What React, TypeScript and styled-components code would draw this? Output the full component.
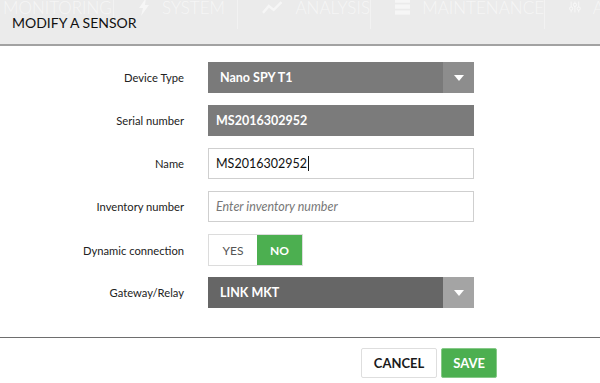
import styled, { createGlobalStyle } from "styled-components";

const GlobalStyle = createGlobalStyle`
    html, body {
        margin: 0;
        padding: 0;
        background: #fff;
        font-family: Lato, "Open Sans", sans-serif;
    }
`;

const Modal = styled.div`
    width: 600px;
    height: 383px;
    background: #fff;
    overflow: hidden;
    display: flex;
    flex-direction: column;
`;

const Header = styled.div`
    position: relative;
    height: 44px;
    background: #ebebeb;
    border-bottom: 2px solid #a2a2a2;
    display: flex;
    align-items: center;
    padding-left: 12px;
    overflow: hidden;
`;

const GhostNav = styled.div`
    position: absolute;
    top: -4px;
    left: 0;
    display: flex;
    align-items: center;
    height: 22px;
    color: rgba(255, 255, 255, 0.55);
    font-size: 17px;
    font-weight: 300;
    white-space: nowrap;
`;

const GhostItem = styled.div<{ $w: number }>`
    width: ${(p) => p.$w}px;
    display: flex;
    align-items: center;
    gap: 12px;
    padding-left: 24px;
    box-sizing: border-box;
    border-left: 1px solid rgba(255, 255, 255, 0.35);
    height: 44px;

    &:first-child {
        padding-left: 3px;
        border-left: none;
    }
`;

const Title = styled.h1`
    position: relative;
    margin: 1px 0 0;
    font-size: 14px;
    font-weight: 400;
    color: #111;
`;

const Body = styled.div`
    padding: 16px 0 29px;
    display: flex;
    flex-direction: column;
    gap: 12px;
`;

const Row = styled.div`
    display: grid;
    grid-template-columns: 184px 266px;
    column-gap: 24px;
    align-items: center;
    height: 31px;
`;

const Label = styled.label`
    text-align: right;
    font-size: 11.2px;
    color: #222;
`;

const Select = styled.div<{ $bg: string; $caret: string }>`
    height: 31px;
    display: flex;
    background: ${(p) => p.$bg};
    color: #fff;
    font-size: 12.5px;
    font-weight: 700;

    & > span:first-child {
        flex: 1;
        display: flex;
        align-items: center;
        padding-left: 12px;
    }

    & > span:last-child {
        width: 31px;
        background: ${(p) => p.$caret};
        display: flex;
        align-items: center;
        justify-content: center;
    }
`;

const Caret = styled.i`
    width: 0;
    height: 0;
    border-left: 5px solid transparent;
    border-right: 5px solid transparent;
    border-top: 6px solid #fff;
`;

const ReadOnly = styled.div`
    height: 31px;
    background: #7b7b7b;
    color: #fff;
    font-size: 12.5px;
    font-weight: 700;
    display: flex;
    align-items: center;
    padding-left: 8px;
`;

const Input = styled.div<{ $placeholder?: boolean }>`
    height: 31px;
    box-sizing: border-box;
    border: 1px solid #cfcfcf;
    background: #fff;
    display: flex;
    align-items: center;
    padding-left: 7px;
    font-size: 12.5px;
    font-style: ${(p) => (p.$placeholder ? "italic" : "normal")};
    color: ${(p) => (p.$placeholder ? "#777" : "#111")};
`;

const TextCursor = styled.span`
    display: inline-block;
    width: 1px;
    height: 15px;
    background: #111;
    margin-left: 1px;
`;

const Toggle = styled.div`
    display: flex;
    height: 32px;
    width: 95px;
    box-sizing: border-box;
    border: 1px solid #dcdcdc;
`;

const ToggleOption = styled.div<{ $active?: boolean }>`
    flex: ${(p) => (p.$active ? "0 0 45px" : "1")};
    display: flex;
    align-items: center;
    justify-content: center;
    font-size: 12px;
    font-weight: ${(p) => (p.$active ? 700 : 400)};
    background: ${(p) => (p.$active ? "#4caf50" : "#fff")};
    color: ${(p) => (p.$active ? "#fff" : "#555")};
`;

const Footer = styled.div`
    border-top: 1px solid #6e6e6e;
    padding: 10px 103px 0 0;
    display: flex;
    justify-content: flex-end;
    gap: 4px;
`;

const Button = styled.button<{ $primary?: boolean }>`
    height: 30px;
    padding: 0 ${(p) => (p.$primary ? "11px" : "12px")};
    min-width: ${(p) => (p.$primary ? "55px" : "74px")};
    border-radius: 2px;
    border: 1px solid ${(p) => (p.$primary ? "#86c988" : "#dedede")};
    background: ${(p) => (p.$primary ? "#4caf50" : "#fff")};
    color: ${(p) => (p.$primary ? "#fff" : "#1a1a1a")};
    font-family: inherit;
    font-size: 13px;
    font-weight: 700;
    cursor: pointer;
`;

function App() {
    return (
        <Modal>
            <GlobalStyle />
            <Header>
                <GhostNav>
                    <GhostItem $w={113}>MONITORING</GhostItem>
                    <GhostItem $w={124}>
                        <svg width="12" height="18" viewBox="0 0 12 18" fill="currentColor">
                            <path d="M8 0 L1 10 H5 L3 18 L11 7 H7 Z" />
                        </svg>
                        SYSTEM
                    </GhostItem>
                    <GhostItem $w={133}>
                        <svg width="22" height="14" viewBox="0 0 22 14" fill="none" stroke="currentColor" strokeWidth="2.5">
                            <path d="M1 13 L7 6 L12 10 L20 2" />
                        </svg>
                        ANALYSIS
                    </GhostItem>
                    <GhostItem $w={174}>
                        <svg width="18" height="20" viewBox="0 0 18 20" fill="currentColor">
                            <rect x="0" y="0" width="18" height="5" />
                            <rect x="0" y="7" width="18" height="5" />
                            <rect x="0" y="14" width="18" height="5" />
                        </svg>
                        MAINTENANCE
                    </GhostItem>
                    <GhostItem $w={60}>
                        <svg width="22" height="20" viewBox="0 0 22 20" fill="none" stroke="currentColor" strokeWidth="2">
                            <path d="M4 0 V20 M11 0 V20 M18 0 V20" />
                            <circle cx="4" cy="13" r="3" fill="#ebebeb" />
                            <circle cx="11" cy="6" r="3" fill="#ebebeb" />
                            <circle cx="18" cy="13" r="3" fill="#ebebeb" />
                        </svg>
                        A
                    </GhostItem>
                </GhostNav>
                <Title>MODIFY A SENSOR</Title>
            </Header>
            <Body>
                <Row>
                    <Label>Device Type</Label>
                    <Select $bg="#7a7a7a" $caret="#8d8d8d">
                        <span>Nano SPY T1</span>
                        <span>
                            <Caret />
                        </span>
                    </Select>
                </Row>
                <Row>
                    <Label>Serial number</Label>
                    <ReadOnly>MS2016302952</ReadOnly>
                </Row>
                <Row>
                    <Label>Name</Label>
                    <Input>
                        MS2016302952
                        <TextCursor />
                    </Input>
                </Row>
                <Row>
                    <Label>Inventory number</Label>
                    <Input $placeholder>Enter inventory number</Input>
                </Row>
                <Row>
                    <Label>Dynamic connection</Label>
                    <Toggle>
                        <ToggleOption>YES</ToggleOption>
                        <ToggleOption $active>NO</ToggleOption>
                    </Toggle>
                </Row>
                <Row>
                    <Label>Gateway/Relay</Label>
                    <Select $bg="#666666" $caret="#a4a4a4">
                        <span>LINK MKT</span>
                        <span>
                            <Caret />
                        </span>
                    </Select>
                </Row>
            </Body>
            <Footer>
                <Button>CANCEL</Button>
                <Button $primary>SAVE</Button>
            </Footer>
        </Modal>
    );
}

export default App;
